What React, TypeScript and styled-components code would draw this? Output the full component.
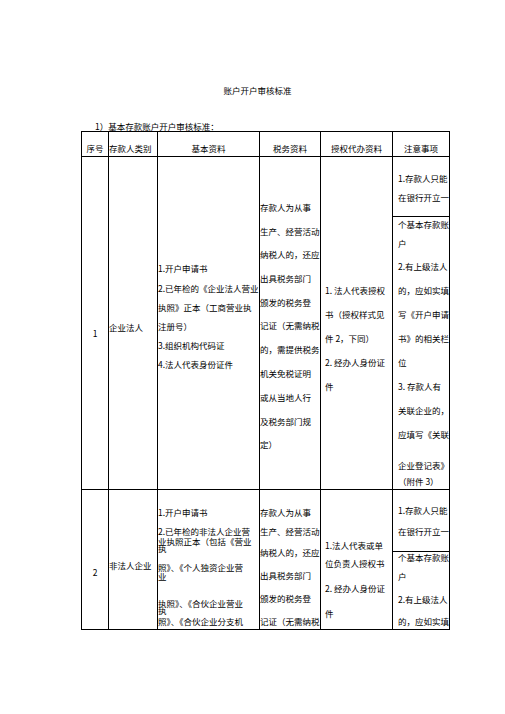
import styled, { createGlobalStyle } from "styled-components";

// text line: [content, centre y on the page]
type Line = [string, number];

type Block = {
  lines: Line[];
  end?: number; // bottom edge of a split block (draws a rule)
};

const GlobalStyle = createGlobalStyle`
  html, body {
    margin: 0;
    padding: 0;
    background: #ffffff;
  }
  body {
    font-family: "Noto Sans CJK SC", "Noto Sans", "Liberation Sans", sans-serif;
    color: #000000;
  }
`;

const Page = styled.div`
  width: 505px;
  padding-top: 84px;
  font-size: 8.5px;
`;

const Title = styled.div`
  height: 12px;
  line-height: 12px;
  text-align: center;
  padding-left: 10px;
  white-space: nowrap;
`;

const Subtitle = styled.div`
  margin-top: 26px;
  height: 9px;
  line-height: 9px;
  padding-left: 95px;
  white-space: nowrap;
`;

const Sheet = styled.table`
  margin-left: 81px;
  width: 369px;
  border-collapse: collapse;
  table-layout: fixed;
`;

const Col = styled.col<{ $w: number }>`
  width: ${(p) => p.$w}px;
`;

const Row = styled.tr<{ $h: number }>`
  height: ${(p) => p.$h}px;
`;

const Head = styled.th<{ $left?: boolean }>`
  border: 1px solid #000;
  padding: 0;
  font-weight: normal;
  vertical-align: top;
  text-align: ${(p) => (p.$left ? "left" : "center")};
  white-space: nowrap;
  overflow: hidden;
`;

const Data = styled.td<{ $pl?: number; $center?: boolean }>`
  border: 1px solid #000;
  padding: 0 0 0 ${(p) => p.$pl ?? 0}px;
  vertical-align: top;
  text-align: ${(p) => (p.$center ? "center" : "left")};
  overflow: hidden;
`;

const Text = styled.div<{ $mt: number }>`
  height: 10px;
  line-height: 10px;
  margin-top: ${(p) => p.$mt}px;
  white-space: nowrap;
`;

const Part = styled.div<{ $rule: boolean }>`
  display: flow-root;
  padding-left: 5px;
  border-bottom: ${(p) => (p.$rule ? "1px solid #000" : "none")};
`;

const renderLines = (lines: Line[], top: number) => {
  let prev = top;
  return lines.map(([t, c], i) => {
    const mt = c - 5 - prev;
    prev = c + 5;
    return (
      <Text key={i} $mt={mt}>
        {t}
      </Text>
    );
  });
};

const headers = ["序号", "存款人类别", "基本资料", "税务资料", "授权代办资料", "注意事项"];
const widths = [27, 49, 102, 61, 72, 57];

const rows: { top: number; h: number; num: Line; kind: Line; basic: Line[]; tax: Line[]; auth: Line[]; notes: Block[] }[] = [
  {
    top: 157,
    h: 333,
    num: ["1", 333],
    kind: ["企业法人", 327],
    basic: [
      ["1.开户申请书", 268],
      ["2.已年检的《企业法人营业", 288],
      ["执照》正本（工商营业执", 307],
      ["注册号）", 326],
      ["3.组织机构代码证", 345],
      ["4.法人代表身份证件", 364],
    ],
    tax: [
      ["存款人为从事", 207],
      ["生产、经营活动", 231],
      ["纳税人的，还应", 254],
      ["出具税务部门", 278],
      ["颁发的税务登", 302],
      ["记证（无需纳税", 325],
      ["的，需提供税务", 349],
      ["机关免税证明", 373],
      ["或从当地人行", 397],
      ["及税务部门规", 421],
      ["定）", 444],
    ],
    auth: [
      ["1. 法人代表授权", 290],
      ["书（授权样式见", 314],
      ["件 2，下同）", 338],
      ["2. 经办人身份证", 362],
      ["件", 386],
    ],
    notes: [
      {
        end: 216,
        lines: [
          ["1.存款人只能", 178],
          ["在银行开立一", 197],
        ],
      },
      {
        lines: [
          ["个基本存款账", 224],
          ["户", 243],
          ["2.有上级法人", 266],
          ["的，应如实填", 290],
          ["写《开户申请", 314],
          ["书》的相关栏", 338],
          ["位", 362],
          ["3. 存款人有", 386],
          ["关联企业的，", 410],
          ["应填写《关联", 434],
          ["企业登记表》", 465],
          ["（附件 3）", 481],
        ],
      },
    ],
  },
  {
    top: 490,
    h: 140,
    num: ["2", 572],
    kind: ["非法人企业", 565],
    basic: [
      ["1.开户申请书", 512],
      ["2.已年检的非法人企业营", 531],
      ["业执照正本（包括《营业", 541],
      ["执", 548],
      ["照》、《个人独资企业营", 567],
      ["业", 576],
      ["执照》、《合伙企业营业", 603],
      ["执", 610],
      ["照》、《合伙企业分支机", 621],
    ],
    tax: [
      ["存款人为从事", 512],
      ["生产、经营活动", 531],
      ["纳税人的，还应", 552],
      ["出具税务部门", 575],
      ["颁发的税务登", 598],
      ["记证（无需纳税", 621],
    ],
    auth: [
      ["1.法人代表或单", 545],
      ["位负责人授权书", 563],
      ["2. 经办人身份证", 588],
      ["件", 613],
    ],
    notes: [
      {
        end: 551,
        lines: [
          ["1.存款人只能", 510],
          ["在银行开立一", 531],
        ],
      },
      {
        lines: [
          ["个基本存款账", 557],
          ["户", 576],
          ["2.有上级法人", 599],
          ["的，应如实填", 621],
        ],
      },
    ],
  },
];

const Notes = ({ blocks, top }: { blocks: Block[]; top: number }) => {
  let y = top;
  return (
    <>
      {blocks.map((b, i) => {
        const start = y;
        const h = b.end !== undefined ? b.end - start : undefined;
        if (b.end !== undefined) y = b.end + 1;
        return (
          <Part key={i} $rule={b.end !== undefined} style={h !== undefined ? { height: h } : undefined}>
            {renderLines(b.lines, start)}
          </Part>
        );
      })}
    </>
  );
};

const App = () => {
  return (
    <Page>
      <GlobalStyle />
      <Title>账户开户审核标准</Title>
      <Subtitle>1）基本存款账户开户审核标准：</Subtitle>
      <Sheet>
        <colgroup>
          {widths.map((w, i) => (
            <Col key={i} $w={w} />
          ))}
        </colgroup>
        <tbody>
          <Row $h={25}>
            {headers.map((h, i) => (
              <Head key={h} $left={i === 1}>
                {renderLines([[h, 148]], 132)}
              </Head>
            ))}
          </Row>
          {rows.map((r) => (
            <Row key={r.num[0]} $h={r.h}>
              <Data $center>{renderLines([r.num], r.top)}</Data>
              <Data>{renderLines([r.kind], r.top)}</Data>
              <Data>{renderLines(r.basic, r.top)}</Data>
              <Data>{renderLines(r.tax, r.top)}</Data>
              <Data $pl={4}>{renderLines(r.auth, r.top)}</Data>
              <Data>
                <Notes blocks={r.notes} top={r.top} />
              </Data>
            </Row>
          ))}
        </tbody>
      </Sheet>
    </Page>
  );
};

export default App;
